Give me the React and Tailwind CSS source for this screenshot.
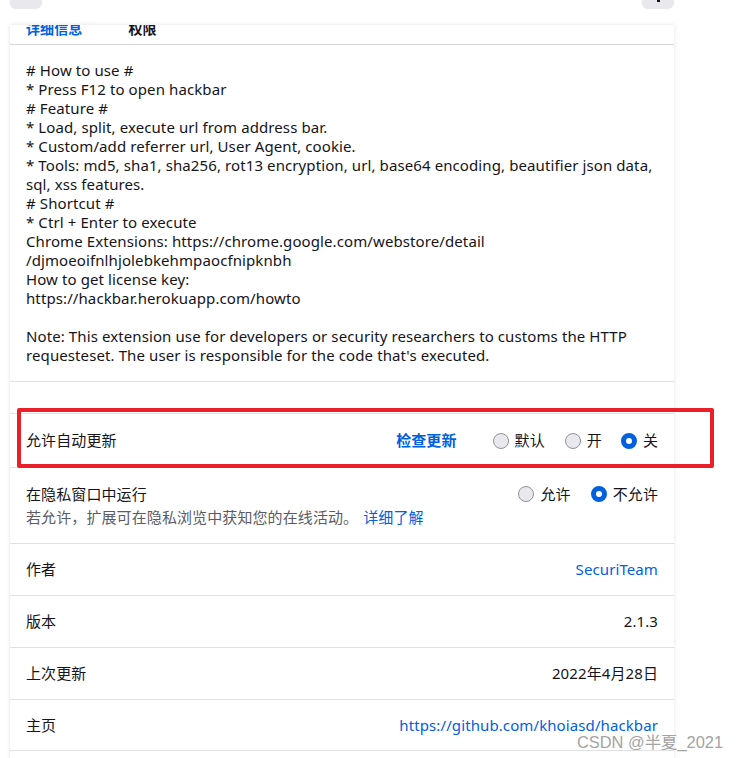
import React from 'react';

const descLines = [
    '# How to use #',
    '* Press F12 to open hackbar',
    '# Feature #',
    '* Load, split, execute url from address bar.',
    '* Custom/add referrer url, User Agent, cookie.',
    '* Tools: md5, sha1, sha256, rot13 encryption, url, base64 encoding, beautifier json data,',
    'sql, xss features.',
    '# Shortcut #',
    '* Ctrl + Enter to execute',
    'Chrome Extensions: https://chrome.google.com/webstore/detail',
    '/djmoeoifnlhjolebkehmpaocfnipknbh',
    'How to get license key:',
    'https://hackbar.herokuapp.com/howto',
    '',
    "Note: This extension use for developers or security researchers to customs the HTTP",
    "requesteset. The user is responsible for the code that's executed.",
];

const Radio = ({ checked, label, className = '' }) => (
    <label className={`flex items-center gap-[6px] ${className}`}>
        {checked ? (
            <span className="w-[16px] h-[16px] rounded-full border-[5px] border-[#0060df] bg-white" />
        ) : (
            <span className="w-[16px] h-[16px] rounded-full border border-[#8f8f9d] bg-[#e9e9ed]" />
        )}
        <span>{label}</span>
    </label>
);

const InfoRow = ({ label, children, last }) => (
    <div className={`h-[52px] border-t border-[#e0e0e6] px-4 flex items-center justify-between ${last ? 'border-b' : ''}`}>
        <span>{label}</span>
        {children}
    </div>
);

const App = () => {
    return (
        <div
            className="relative w-[738px] h-[758px] overflow-hidden bg-white text-[15px] tracking-[0.1px] text-[#15141a]"
            style={{ fontFamily: '"Noto Sans", "Noto Sans CJK SC", sans-serif' }}
        >
            <div className="ml-[10px] w-[664px]">
                <div className="h-[9px] flex justify-between">
                    <div className="w-[32px] h-[9px] rounded-b-md bg-[#e9e9ed]" />
                    <div className="w-[32px] h-[9px] rounded-b-md bg-[#e9e9ed] flex justify-center">
                        <div className="w-[3px] h-[2px] bg-[#15141a]" />
                    </div>
                </div>

                <div className="mt-[16px] bg-white shadow-[0_0_4px_rgba(0,0,0,0.12)]">
                    {/* tab strip, scrolled so the labels are cut at the top */}
                    <div className="h-[20px] overflow-hidden border-b border-[#d7d7db] flex gap-[46px] px-4 text-[14px] font-bold leading-[20px]">
                        <span className="-mt-[6px] text-[#0060df]">详细信息</span>
                        <span className="-mt-[6px]">权限</span>
                    </div>

                    <div className="p-4 leading-[19px] border-b border-[#e0e0e6]">
                        {descLines.map((line, i) => (
                            <div key={i} className="h-[19px] whitespace-nowrap">{line}</div>
                        ))}
                    </div>

                    <div className="h-[31px]" />

                    <div className="h-[54px] border-t border-[#e0e0e6] px-4 flex items-center">
                        <span className="flex-1">允许自动更新</span>
                        <span className="font-bold text-[#0060df]">检查更新</span>
                        <Radio label="默认" className="ml-[36px]" />
                        <Radio label="开" className="ml-[20px]" />
                        <Radio label="关" checked className="ml-[19px]" />
                    </div>

                    <div className="border-t border-[#e0e0e6] px-4 pt-4 pb-4">
                        <div className="flex items-center justify-between leading-[20px]">
                            <span>在隐私窗口中运行</span>
                            <div className="flex items-center">
                                <Radio label="允许" />
                                <Radio label="不允许" checked className="ml-[20px]" />
                            </div>
                        </div>
                        <div className="mt-[3px] leading-[20px] text-[#5b5b66]">
                            若允许，扩展可在隐私浏览中获知您的在线活动。
                            <span className="ml-[5px] text-[#0060df]">详细了解</span>
                        </div>
                    </div>

                    <InfoRow label="作者">
                        <span className="text-[#0060df]">SecuriTeam</span>
                    </InfoRow>
                    <InfoRow label="版本">
                        <span>2.1.3</span>
                    </InfoRow>
                    <InfoRow label="上次更新">
                        <span>2022年4月28日</span>
                    </InfoRow>
                    <InfoRow label="主页" last>
                        <span className="text-[#0060df]">https://github.com/khoiasd/hackbar</span>
                    </InfoRow>
                    <div className="h-[20px]" />
                </div>
            </div>

            {/* annotation box */}
            <div className="absolute left-[17px] top-[408px] w-[697px] h-[60px] border-[4px] border-[#ea1f2a] rounded-[2px]" />

            {/* watermark */}
            <div
                className="absolute left-[577px] top-[730px] text-[16.4px] tracking-normal text-[#a3a3a3] whitespace-nowrap"
                style={{ fontFamily: '"Liberation Sans", "Noto Sans CJK SC", sans-serif' }}
            >
                CSDN @半夏_2021
            </div>
        </div>
    );
};

export default App;
